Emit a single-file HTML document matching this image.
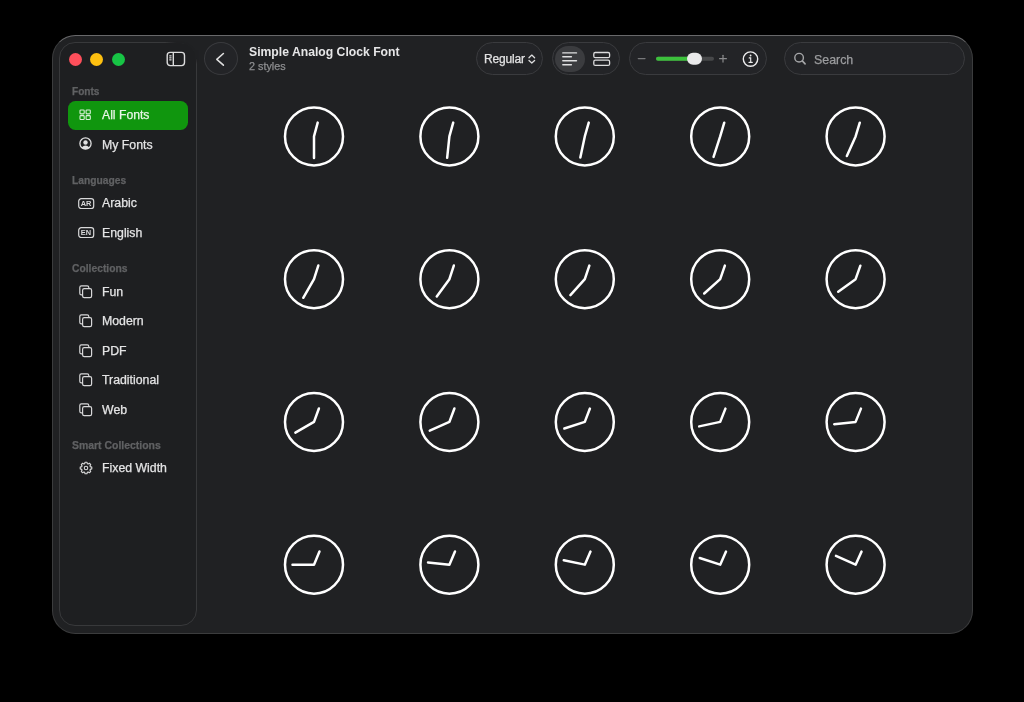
<!DOCTYPE html>
<html><head><meta charset="utf-8"><style>
html,body{margin:0;padding:0;background:#000;width:1024px;height:702px;overflow:hidden}
body{position:relative;font-family:"Liberation Sans",sans-serif}
.t{position:absolute;white-space:nowrap;-webkit-text-stroke:0.25px currentColor;will-change:transform}
.ic{position:absolute;overflow:visible;will-change:transform}
#win{position:absolute;left:51.5px;top:35px;width:921px;height:598.5px;border-radius:23.5px;background:#202123;box-sizing:border-box;border:1px solid #3b3c3d;border-top-color:#68686a}
#side{position:absolute;left:59.2px;top:42px;width:137.8px;height:584.3px;border-radius:16px;background:#1e1f21;box-sizing:border-box;border:1px solid #38393b}
.dot{position:absolute;width:13px;height:13px;border-radius:50%;top:52.5px}
#sel{position:absolute;left:68.2px;top:100.5px;width:119.6px;height:29.4px;border-radius:7.5px;background:#10960e}
.pill{position:absolute;top:42.4px;height:33px;box-sizing:border-box;border:1px solid #3a3b3e;background:#232427;border-radius:17px}
</style></head><body>
<div id="win"></div>
<div id="side"></div>
<svg class="ic" style="left:0;top:0" width="1024" height="702"><defs><linearGradient id="fade" x1="0" y1="0" x2="1" y2="0"><stop offset="0" stop-color="#1f2022" stop-opacity="0"/><stop offset="0.35" stop-color="#1f2022" stop-opacity="1"/></linearGradient><linearGradient id="fadev" x1="0" y1="0" x2="0" y2="1"><stop offset="0.6" stop-color="#1f2022" stop-opacity="1"/><stop offset="1" stop-color="#1f2022" stop-opacity="0"/></linearGradient></defs><path d="M165 42.5 H180.8 A16 16 0 0 1 196.6 58.5" fill="none" stroke="url(#fade)" stroke-width="2.2"/><rect x="195" y="50" width="3.2" height="14" fill="url(#fadev)"/></svg>
<div class="dot" style="left:69px;background:#fe4f5b"></div>
<div class="dot" style="left:90.1px;background:#fec010"></div>
<div class="dot" style="left:111.6px;background:#17c445"></div>
<div id="sel"></div>
<div class="pill" style="left:204px;width:34px;border-radius:50%"></div>
<div class="pill" style="left:475.9px;width:67.5px"></div>
<div class="pill" style="left:552px;width:68px"></div>
<div style="position:absolute;left:555.2px;top:45.5px;width:30px;height:26.5px;border-radius:14px;background:#3b3c3f"></div>
<div class="pill" style="left:629px;width:138px"></div>
<div class="pill" style="left:783.8px;width:181px"></div>
<svg class="ic" style="left:166px;top:50.8px" width="20" height="16" viewBox="0 0 20 16" ><rect x="1.2" y="1.4" width="17.3" height="13.2" rx="3" fill="none" stroke="#dcdcdd" stroke-width="1.4"/><line x1="7.3" y1="1.5" x2="7.3" y2="14.5" stroke="#dcdcdd" stroke-width="1.4"/><g stroke="#dcdcdd" stroke-width="1.2" stroke-linecap="round"><line x1="3.7" y1="4.8" x2="5.1" y2="4.8"/><line x1="3.7" y1="6.8" x2="5.1" y2="6.8"/><line x1="3.7" y1="8.8" x2="5.1" y2="8.8"/></g></svg>
<svg class="ic" style="left:79.4px;top:109px" width="13" height="13" viewBox="0 0 13 13" ><rect x="1" y="1" width="4.2" height="3.9" rx="0.8" fill="none" stroke="#d8f0d8" stroke-width="1.1"/><rect x="1" y="6.6" width="4.2" height="3.9" rx="0.8" fill="none" stroke="#d8f0d8" stroke-width="1.1"/><rect x="7.1" y="1" width="4.2" height="3.9" rx="0.8" fill="none" stroke="#d8f0d8" stroke-width="1.1"/><rect x="7.1" y="6.6" width="4.2" height="3.9" rx="0.8" fill="none" stroke="#d8f0d8" stroke-width="1.1"/></svg>
<svg class="ic" style="left:79.3px;top:137.1px" width="13" height="13" viewBox="0 0 13 13" ><circle cx="6.5" cy="6.5" r="5.6" fill="none" stroke="#e0e0e1" stroke-width="1.3"/><circle cx="6.5" cy="5.5" r="2.2" fill="#e0e0e1"/><path d="M2.6 10.4 Q6.5 6.8 10.4 10.4 L9 11.7 Q6.5 12.6 4 11.7Z" fill="#e0e0e1"/></svg>
<svg class="ic" style="left:78px;top:197.9px" width="17" height="12" viewBox="0 0 17 12" ><rect x="0.7" y="0.7" width="15" height="9.8" rx="2.6" fill="none" stroke="#d8d8d9" stroke-width="1.2"/><text x="8.0" y="7.7" text-anchor="middle" font-family="Liberation Sans" font-weight="700" font-size="7.4" fill="#d8d8d9">AR</text></svg>
<svg class="ic" style="left:78px;top:227.4px" width="17" height="12" viewBox="0 0 17 12" ><rect x="0.7" y="0.7" width="15" height="9.8" rx="2.6" fill="none" stroke="#d8d8d9" stroke-width="1.2"/><text x="8.0" y="7.7" text-anchor="middle" font-family="Liberation Sans" font-weight="700" font-size="7.4" fill="#d8d8d9">EN</text></svg>
<svg class="ic" style="left:79px;top:284.5px" width="14" height="14" viewBox="0 0 14 14" ><rect x="0.8" y="0.8" width="9" height="9" rx="1.6" fill="none" stroke="#d8d8d9" stroke-width="1.2"/><rect x="3.6" y="3.6" width="9" height="9" rx="1.6" fill="#1e1f21" stroke="#d8d8d9" stroke-width="1.2"/></svg>
<svg class="ic" style="left:79px;top:314.1px" width="14" height="14" viewBox="0 0 14 14" ><rect x="0.8" y="0.8" width="9" height="9" rx="1.6" fill="none" stroke="#d8d8d9" stroke-width="1.2"/><rect x="3.6" y="3.6" width="9" height="9" rx="1.6" fill="#1e1f21" stroke="#d8d8d9" stroke-width="1.2"/></svg>
<svg class="ic" style="left:79px;top:343.7px" width="14" height="14" viewBox="0 0 14 14" ><rect x="0.8" y="0.8" width="9" height="9" rx="1.6" fill="none" stroke="#d8d8d9" stroke-width="1.2"/><rect x="3.6" y="3.6" width="9" height="9" rx="1.6" fill="#1e1f21" stroke="#d8d8d9" stroke-width="1.2"/></svg>
<svg class="ic" style="left:79px;top:373.3px" width="14" height="14" viewBox="0 0 14 14" ><rect x="0.8" y="0.8" width="9" height="9" rx="1.6" fill="none" stroke="#d8d8d9" stroke-width="1.2"/><rect x="3.6" y="3.6" width="9" height="9" rx="1.6" fill="#1e1f21" stroke="#d8d8d9" stroke-width="1.2"/></svg>
<svg class="ic" style="left:79px;top:402.9px" width="14" height="14" viewBox="0 0 14 14" ><rect x="0.8" y="0.8" width="9" height="9" rx="1.6" fill="none" stroke="#d8d8d9" stroke-width="1.2"/><rect x="3.6" y="3.6" width="9" height="9" rx="1.6" fill="#1e1f21" stroke="#d8d8d9" stroke-width="1.2"/></svg>
<svg class="ic" style="left:78.8px;top:461.4px" width="14" height="14" viewBox="0 0 14 14" ><path d="M6.08 1.22 L7.92 1.22 L8.32 2.70 L9.11 3.03 L10.44 2.27 L11.73 3.56 L10.97 4.89 L11.30 5.68 L12.78 6.08 L12.78 7.92 L11.30 8.32 L10.97 9.11 L11.73 10.44 L10.44 11.73 L9.11 10.97 L8.32 11.30 L7.92 12.78 L6.08 12.78 L5.68 11.30 L4.89 10.97 L3.56 11.73 L2.27 10.44 L3.03 9.11 L2.70 8.32 L1.22 7.92 L1.22 6.08 L2.70 5.68 L3.03 4.89 L2.27 3.56 L3.56 2.27 L4.89 3.03 L5.68 2.70Z" fill="none" stroke="#d8d8d9" stroke-width="1.15" stroke-linejoin="round"/><circle cx="7" cy="7" r="1.75" fill="none" stroke="#d8d8d9" stroke-width="1.1"/></svg>

<svg class="ic" style="left:0;top:0" width="1024" height="702"><g fill="none" stroke="#fff" stroke-width="2.5" stroke-linecap="round" stroke-linejoin="round"><circle cx="314.00" cy="136.40" r="29" /><polyline points="317.70,122.59 314.00,136.40 314.00,157.90" /><circle cx="449.40" cy="136.40" r="29" /><polyline points="453.22,122.62 449.40,136.40 447.15,157.78" /><circle cx="584.80" cy="136.40" r="29" /><polyline points="588.74,122.65 584.80,136.40 580.33,157.43" /><circle cx="720.20" cy="136.40" r="29" /><polyline points="724.26,122.69 720.20,136.40 713.56,156.85" /><circle cx="855.60" cy="136.40" r="29" /><polyline points="859.78,122.72 855.60,136.40 846.86,156.04" /><circle cx="314.00" cy="279.15" r="29" /><polyline points="318.30,265.51 314.00,279.15 303.25,297.77" /><circle cx="449.40" cy="279.15" r="29" /><polyline points="453.82,265.55 449.40,279.15 436.76,296.54" /><circle cx="584.80" cy="279.15" r="29" /><polyline points="589.34,265.59 584.80,279.15 570.41,295.13" /><circle cx="720.20" cy="279.15" r="29" /><polyline points="724.86,265.63 720.20,279.15 704.22,293.54" /><circle cx="855.60" cy="279.15" r="29" /><polyline points="860.37,265.67 855.60,279.15 838.21,291.79" /><circle cx="314.00" cy="421.90" r="29" /><polyline points="318.89,408.46 314.00,421.90 295.38,432.65" /><circle cx="449.40" cy="421.90" r="29" /><polyline points="454.41,408.51 449.40,421.90 429.76,430.64" /><circle cx="584.80" cy="421.90" r="29" /><polyline points="589.92,408.55 584.80,421.90 564.35,428.54" /><circle cx="720.20" cy="421.90" r="29" /><polyline points="725.44,408.60 720.20,421.90 699.17,426.37" /><circle cx="855.60" cy="421.90" r="29" /><polyline points="860.96,408.64 855.60,421.90 834.22,424.15" /><circle cx="314.00" cy="564.65" r="29" /><polyline points="319.47,551.44 314.00,564.65 292.50,564.65" /><circle cx="449.40" cy="564.65" r="29" /><polyline points="454.99,551.49 449.40,564.65 428.02,562.40" /><circle cx="584.80" cy="564.65" r="29" /><polyline points="590.50,551.54 584.80,564.65 563.77,560.18" /><circle cx="720.20" cy="564.65" r="29" /><polyline points="726.02,551.59 720.20,564.65 699.75,558.01" /><circle cx="855.60" cy="564.65" r="29" /><polyline points="861.53,551.64 855.60,564.65 835.96,555.91" /></g></svg>
<svg class="ic" style="left:0;top:0" width="1024" height="702">
<polyline points="223.4,53.5 216.8,59.3 223.4,65.1" fill="none" stroke="#dedede" stroke-width="1.6" stroke-linecap="round" stroke-linejoin="round"/>
<path d="M529 57.7 L531.8 55.1 L534.6 57.7 M529 60.5 L531.8 63.1 L534.6 60.5" fill="none" stroke="#dcdcdd" stroke-width="1.3" stroke-linecap="round" stroke-linejoin="round"/>
<g stroke="#e0e0e1" stroke-width="1.4" stroke-linecap="round"><line x1="562.8" y1="52.9" x2="576.5" y2="52.9"/><line x1="562.8" y1="56.8" x2="571.4" y2="56.8"/><line x1="562.8" y1="60.75" x2="576.5" y2="60.75"/><line x1="562.8" y1="64.7" x2="571.4" y2="64.7"/></g>
<g fill="none" stroke="#dcdcdd" stroke-width="1.3"><rect x="593.8" y="52.5" width="15.8" height="5.2" rx="1.5"/><rect x="593.8" y="60.2" width="15.8" height="5.2" rx="1.5"/></g>
<line x1="638.3" y1="58.6" x2="645" y2="58.6" stroke="#77787a" stroke-width="1.3" stroke-linecap="round"/>
<line x1="658" y1="58.8" x2="712" y2="58.8" stroke="#47484a" stroke-width="4" stroke-linecap="round"/>
<line x1="658" y1="58.8" x2="692" y2="58.8" stroke="#3cc03c" stroke-width="4" stroke-linecap="round"/>
<rect x="687" y="52.8" width="15" height="12" rx="6" fill="#e9e9ea"/>
<g stroke="#8a8b8d" stroke-width="1.2" stroke-linecap="round"><line x1="719.6" y1="58.7" x2="726.4" y2="58.7"/><line x1="723" y1="55.3" x2="723" y2="62.1"/></g>
<circle cx="750.5" cy="59.1" r="7.2" fill="none" stroke="#ececed" stroke-width="1.4"/>
<circle cx="750.6" cy="55.5" r="0.9" fill="#ececed"/>
<path d="M749.2 57.9 H750.7 V62.3 M749 62.4 H752.3" fill="none" stroke="#ececed" stroke-width="1.1" stroke-linecap="round"/>
<circle cx="799.1" cy="57.7" r="4.3" fill="none" stroke="#a5a6a8" stroke-width="1.4"/>
<line x1="802.3" y1="60.9" x2="805.1" y2="63.9" stroke="#a5a6a8" stroke-width="1.6" stroke-linecap="round"/>
</svg>
<div class="t" style="left:72.30px;top:87.15px;font-size:10.1px;line-height:10.1px;color:#606163;font-weight:700;">Fonts</div>
<div class="t" style="left:101.70px;top:109.17px;font-size:12.2px;line-height:12.2px;color:#e8f6e8;font-weight:400;">All Fonts</div>
<div class="t" style="left:101.70px;top:138.59px;font-size:12.3px;line-height:12.3px;color:#e4e4e5;font-weight:400;">My Fonts</div>
<div class="t" style="left:72.30px;top:175.52px;font-size:10.25px;line-height:10.25px;color:#606163;font-weight:700;">Languages</div>
<div class="t" style="left:101.70px;top:197.19px;font-size:12.3px;line-height:12.3px;color:#e4e4e5;font-weight:400;">Arabic</div>
<div class="t" style="left:101.70px;top:226.59px;font-size:12.3px;line-height:12.3px;color:#e4e4e5;font-weight:400;">English</div>
<div class="t" style="left:72.30px;top:263.88px;font-size:10.3px;line-height:10.3px;color:#606163;font-weight:700;">Collections</div>
<div class="t" style="left:101.70px;top:285.59px;font-size:12.3px;line-height:12.3px;color:#e4e4e5;font-weight:400;">Fun</div>
<div class="t" style="left:101.70px;top:315.19px;font-size:12.3px;line-height:12.3px;color:#e4e4e5;font-weight:400;">Modern</div>
<div class="t" style="left:101.70px;top:344.79px;font-size:12.3px;line-height:12.3px;color:#e4e4e5;font-weight:400;">PDF</div>
<div class="t" style="left:101.70px;top:374.39px;font-size:12.3px;line-height:12.3px;color:#e4e4e5;font-weight:400;">Traditional</div>
<div class="t" style="left:101.70px;top:403.99px;font-size:12.3px;line-height:12.3px;color:#e4e4e5;font-weight:400;">Web</div>
<div class="t" style="left:72.30px;top:440.65px;font-size:10.45px;line-height:10.45px;color:#606163;font-weight:700;">Smart Collections</div>
<div class="t" style="left:101.70px;top:462.49px;font-size:12.3px;line-height:12.3px;color:#e4e4e5;font-weight:400;">Fixed Width</div>
<div class="t" style="left:248.80px;top:46.37px;font-size:12.2px;line-height:12.2px;color:#e6e6e7;font-weight:700;-webkit-text-stroke:0;">Simple Analog Clock Font</div>
<div class="t" style="left:248.80px;top:60.56px;font-size:10.8px;line-height:10.8px;color:#8d8e90;font-weight:400;">2 styles</div>
<div class="t" style="left:483.60px;top:53.04px;font-size:12.0px;line-height:12.0px;color:#e2e2e3;font-weight:400;letter-spacing:-0.17px;">Regular</div>
<div class="t" style="left:813.50px;top:53.70px;font-size:12.4px;line-height:12.4px;color:#9b9c9e;font-weight:400;">Search</div>

</body></html>
